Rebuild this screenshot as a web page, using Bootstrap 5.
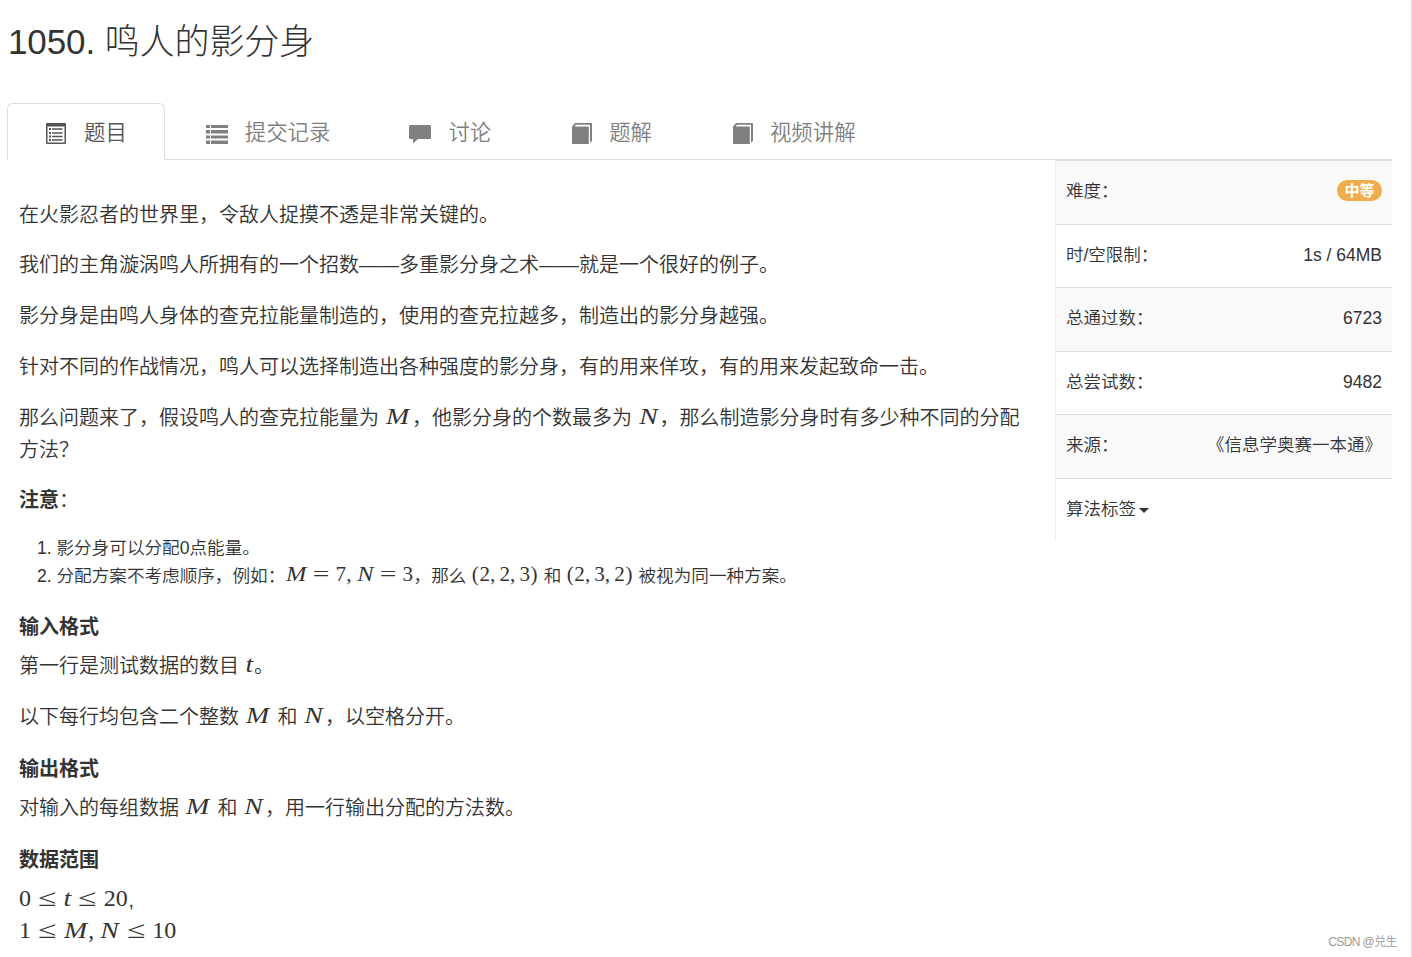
<!DOCTYPE html>
<html lang="zh-CN">
<head>
    <meta charset="UTF-8">
    <title>1050. 鸣人的影分身</title>
    <link href="https://cdn.jsdelivr.net/npm/bootstrap@5.3.0/dist/css/bootstrap.min.css" rel="stylesheet">
    <style>
        body {
            font-family: "Liberation Sans", "Noto Sans CJK SC", sans-serif;
            font-weight: 350;
            font-size: 17.5px;
            color: #333;
            background-color: #fff;
        }

        .page {
            height: 957px;
            padding: 20px 19px 0 7px;
            border-right: 1px solid #ddd;
            overflow: hidden;
        }

        .problem-title {
            font-size: 35px;
            font-weight: 300;
            line-height: 44px;
            letter-spacing: -.1px;
            margin: 0 0 39px 1px;
        }

        .nav-tabs {
            --bs-nav-tabs-border-color: #ddd;
            height: 57px;
        }

        .nav-tabs .nav-link {
            display: flex;
            align-items: center;
            height: 57px;
            padding: 3px 37px 0;
            margin-right: 2px;
            font-size: 21.4px;
            color: #808080;
        }

        .nav-tabs .nav-link.active {
            color: #555;
            border-color: #ddd #ddd #fff;
        }

        .nav-tabs svg {
            width: 22px;
            height: 22px;
            margin: 1px 17px 0 0;
            fill: currentColor;
        }

        .nav-tabs .wide .nav-link {
            padding-left: 38px;
        }

        .problem-body {
            width: 1048px;
            padding: 38.5px 20px 0 12px;
            font-size: 20px;
            line-height: 32px;
        }

        .problem-body p {
            margin-bottom: 18.75px;
        }

        .problem-body strong {
            font-weight: 700;
        }

        .problem-body ol {
            font-size: 17.6px;
            line-height: 28px;
            padding-left: 37.5px;
            margin: -1.5px 0 26px;
        }

        .problem-body h4 {
            font-size: 20px;
            font-weight: 700;
            line-height: 22px;
            margin: 25px 0 12.5px;
        }

        .info-list {
            width: 337px;
            height: 380px;
            border-left: 1px solid #eee;
            border-top: 1px solid #ddd;
        }

        .info-row {
            height: 63.4px;
            padding: 0 10px 2px;
            border-top: 1px solid #ddd;
        }

        .info-row:first-child {
            height: 63px;
            border-top: 0;
        }

        .info-row:nth-child(odd) {
            background-color: #f9f9f9;
        }

        .level {
            background-color: #f0ad4e;
            color: #fff;
            font-size: 15px;
            font-weight: 700;
            line-height: 21px;
            padding: 0 7.5px;
            border-radius: 11px;
            margin-bottom: 2px;
        }

        .caret {
            border-top: 5px solid #333;
            border-left: 5px solid transparent;
            border-right: 5px solid transparent;
            margin: 4px 0 0 3px;
        }

        /* formulas */
        .tex {
            display: inline-block;
            font-family: "Liberation Serif", serif;
            font-weight: 400;
            font-size: 1.2em;
            line-height: 1;
            margin-right: .03em;
            white-space: nowrap;
            transform: translateY(-1px);
        }

        .tex i, .tex b, .tex u {
            display: inline-block;
            font-weight: 400;
            text-decoration: none;
            text-align: center;
        }

        .tex .v-m { width: 1.051em; transform: scaleX(1.16); }
        .tex .v-m:only-child { margin-right: .06em; }
        .tex .v-n { width: .888em; transform: scaleX(1.16); }
        .tex .v-t { width: .361em; transform: scaleX(1.15); }
        .tex b { width: .778em; margin: 0 .278em; transform: scaleX(1.4); }
        .tex u { width: .445em; text-align: left; }
        .tex .paren { width: .389em; text-align: center; }

        .watermark {
            position: absolute;
            right: 15px;
            bottom: 6px;
            font-size: 12px;
            letter-spacing: -.6px;
            line-height: 18px;
            color: #999;
        }
    </style>
</head>
<body>
    <div class="page">
        <h1 class="problem-title">1050. 鸣人的影分身</h1>

        <ul class="nav nav-tabs">
            <li class="nav-item">
                <a class="nav-link active" href="#">
                    <svg viewBox="0 0 22 22"><path fill-rule="evenodd" d="M2 0h18q1 0 1 1v19q0 1-1 1H2q-1 0-1-1V1q0-1 1-1zM2.500 3.500v16h17v-16z"/><path d="M4 5h2v2H4zM4 9h2v2H4zM4 12.500h2v2H4zM4 16h2v2H4zM7 5.200h10.500v1.600H7zM7 9.200h10.500v1.600H7zM7 12.700h10.500v1.600H7zM7 16.200h10.500v1.600H7z"/></svg>
                    题目
                </a>
            </li>
            <li class="nav-item wide">
                <a class="nav-link" href="#">
                    <svg viewBox="0 0 22 22"><path d="M0 2h4v3H0zM0 7h4v3.500H0zM0 12.500h4v3H0zM0 17.500h4v3.500H0zM5 2h17v3H5zM5 7h17v3.500H5zM5 12.500h17v3H5zM5 17.500h17v3.500H5z"/></svg>
                    提交记录
                </a>
            </li>
            <li class="nav-item wide">
                <a class="nav-link" href="#">
                    <svg viewBox="0 0 22 22"><path d="M1.500 2h19q1.500 0 1.500 1.500v11q0 1.500-1.500 1.500H9l-5 4.500v-4.500H1.500Q0 16 0 14.500v-11Q0 2 1.500 2z"/></svg>
                    讨论
                </a>
            </li>
            <li class="nav-item wide">
                <a class="nav-link" href="#">
                    <svg viewBox="0 0 22 22"><path d="M2 3.500L5 0h16q1 0 1 1v17l-2 1.500V1.800H6L4.500 3.500H18q.800 0 .800.800V21H2z"/></svg>
                    题解
                </a>
            </li>
            <li class="nav-item wide">
                <a class="nav-link" href="#">
                    <svg viewBox="0 0 22 22"><path d="M2 3.500L5 0h16q1 0 1 1v17l-2 1.500V1.800H6L4.500 3.500H18q.800 0 .800.800V21H2z"/></svg>
                    视频讲解
                </a>
            </li>
        </ul>

        <div class="d-flex align-items-start">
            <div class="problem-body flex-shrink-0">
                <p>在火影忍者的世界里，令敌人捉摸不透是非常关键的。</p>
                <p>我们的主角漩涡鸣人所拥有的一个招数——多重影分身之术——就是一个很好的例子。</p>
                <p>影分身是由鸣人身体的查克拉能量制造的，使用的查克拉越多，制造出的影分身越强。</p>
                <p>针对不同的作战情况，鸣人可以选择制造出各种强度的影分身，有的用来佯攻，有的用来发起致命一击。</p>
                <p>那么问题来了，假设鸣人的查克拉能量为 <span class="tex"><i class="v-m">M</i></span>，他影分身的个数最多为 <span class="tex"><i class="v-n">N</i></span>，那么制造影分身时有多少种不同的分配方法？</p>
                <p><strong>注意</strong>：</p>
                <ol>
                    <li>影分身可以分配0点能量。</li>
                    <li>分配方案不考虑顺序，例如：<span class="tex"><i class="v-m">M</i><b>=</b>7<u>,</u><i class="v-n">N</i><b>=</b>3</span>，那么 <span class="tex"><u class="paren">(</u>2<u>,</u>2<u>,</u>3<u class="paren">)</u></span> 和 <span class="tex"><u class="paren">(</u>2<u>,</u>3<u>,</u>2<u class="paren">)</u></span> 被视为同一种方案。</li>
                </ol>

                <h4>输入格式</h4>
                <p>第一行是测试数据的数目 <span class="tex"><i class="v-t">t</i></span>。</p>
                <p>以下每行均包含二个整数 <span class="tex"><i class="v-m">M</i></span> 和 <span class="tex"><i class="v-n">N</i></span>，以空格分开。</p>

                <h4>输出格式</h4>
                <p>对输入的每组数据 <span class="tex"><i class="v-m">M</i></span> 和 <span class="tex"><i class="v-n">N</i></span>，用一行输出分配的方法数。</p>

                <h4>数据范围</h4>
                <p><span class="tex">0<b>≤</b><i class="v-t">t</i><b>≤</b>20</span>,<br>
                <span class="tex">1<b>≤</b><i class="v-m">M</i><u>,</u><i class="v-n">N</i><b>≤</b>10</span></p>
            </div>

            <div class="info-list">
                <div class="info-row d-flex align-items-center justify-content-between">
                    <span>难度：</span><span class="level">中等</span>
                </div>
                <div class="info-row d-flex align-items-center justify-content-between">
                    <span>时/空限制：</span><span>1s / 64MB</span>
                </div>
                <div class="info-row d-flex align-items-center justify-content-between">
                    <span>总通过数：</span><span>6723</span>
                </div>
                <div class="info-row d-flex align-items-center justify-content-between">
                    <span>总尝试数：</span><span>9482</span>
                </div>
                <div class="info-row d-flex align-items-center justify-content-between">
                    <span>来源：</span><span>《信息学奥赛一本通》</span>
                </div>
                <div class="info-row d-flex align-items-center bg-white">
                    <span>算法标签</span><span class="caret"></span>
                </div>
            </div>
        </div>
    </div>
    <div class="watermark">CSDN @兑生</div>

    <script src="https://cdn.jsdelivr.net/npm/bootstrap@5.3.0/dist/js/bootstrap.bundle.min.js"></script>
</body>
</html>
